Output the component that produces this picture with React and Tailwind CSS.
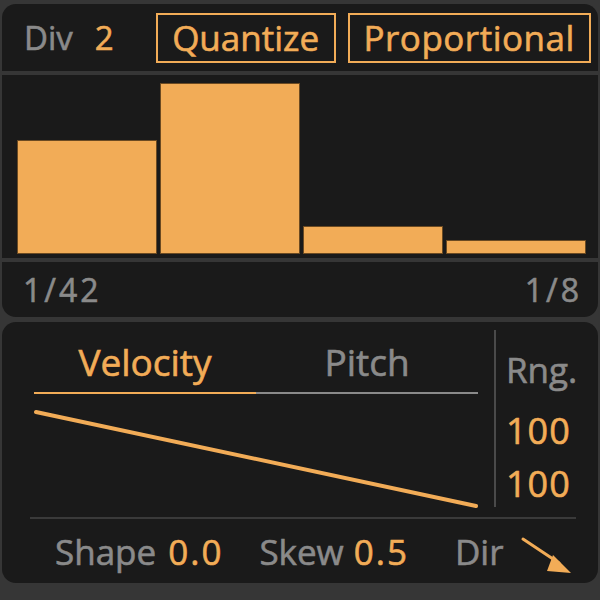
import React from "react";

const bars = [114, 171, 28, 14];

export default function App() {
  return (
    <div
      className="w-[600px] h-[600px] bg-[#363636] pt-[4px] px-[2px] flex flex-col [-webkit-text-stroke:0.6px_currentColor]"
      style={{ fontFamily: "'Open Sans', Lato, sans-serif" }}
    >
      {/* header */}
      <div className="h-[67px] bg-[#1a1a1a] rounded-t-[14px] flex items-center pl-[22px] pr-[6px]">
        <span className="text-[33px] text-[#8a8a8a] leading-none">Div</span>
        <span className="text-[33px] text-[#f2ac57] leading-none ml-[22px]">2</span>
        <div className="ml-[42px] h-[50px] w-[180px] border-2 border-[#f2ac57] flex items-center justify-center text-[35px] text-[#f2ac57] leading-none">
          Quantize
        </div>
        <div className="ml-[12px] h-[50px] w-[243px] border-2 border-[#f2ac57] flex items-center justify-center text-[35px] text-[#f2ac57] leading-none tracking-[0.5px]">
          Proportional
        </div>
      </div>

      {/* chart */}
      <div className="mt-[4px] h-[183px] bg-[#1a1a1a] flex items-end gap-[3px] pl-[15px] pb-[4px]">
        {bars.map((h, i) => (
          <div
            key={i}
            className="w-[140px] bg-[#f2ac57] border border-[#6b4a22]"
            style={{ height: h }}
          />
        ))}
      </div>

      {/* labels */}
      <div className="mt-[4px] h-[55px] bg-[#1a1a1a] rounded-b-[14px] flex items-center justify-between pl-[21px] pr-[16px] text-[32px] text-[#8a8a8a] leading-none tracking-[3px]">
        <span>1/42</span>
        <span>1/8</span>
      </div>

      {/* bottom panel */}
      <div className="mt-[5px] h-[261px] bg-[#1a1a1a] rounded-[14px] flex flex-col">
        <div className="flex h-[195px]">
          <div className="w-[444px] ml-[32px] flex flex-col">
            <div className="h-[70px] flex">
              <div className="w-[222px] flex items-end justify-center pb-[12px] text-[37px] text-[#f2ac57] leading-none">
                Velocity
              </div>
              <div className="w-[222px] flex items-end justify-center pb-[12px] text-[37px] text-[#8a8a8a] leading-none">
                Pitch
              </div>
            </div>
            <div className="flex h-[2px]">
              <div className="w-[222px] bg-[#f2ac57]" />
              <div className="w-[222px] bg-[#8a8a8a]" />
            </div>
            <svg width="446" height="120" viewBox="0 0 446 120">
              <line x1="2" y1="18" x2="442" y2="112" stroke="#f2ac57" strokeWidth="4" strokeLinecap="round" />
            </svg>
          </div>
          <div className="ml-[16px] mt-[8px] w-[2px] h-[177px] bg-[#4a4a4a]" />
          <div className="flex flex-col pl-[10px] pt-[30px]">
            <span className="text-[35px] text-[#8a8a8a] leading-none">Rng.</span>
            <span className="mt-[26px] text-[36px] text-[#f2ac57] leading-none tracking-[1px]">100</span>
            <span className="mt-[17px] text-[36px] text-[#f2ac57] leading-none tracking-[1px]">100</span>
          </div>
        </div>
        <div className="ml-[28px] w-[546px] h-[2px] bg-[#3a3a3a]" />
        <div className="flex items-center h-[64px] pl-[53px] text-[35px] leading-none">
          <span className="text-[#8a8a8a]">Shape</span>
          <span className="ml-[12px] text-[#f2ac57] tracking-[2px]">0.0</span>
          <span className="ml-[36px] text-[#8a8a8a]">Skew</span>
          <span className="ml-[10px] text-[#f2ac57] tracking-[2px]">0.5</span>
          <span className="ml-[46px] text-[#8a8a8a]">Dir</span>
          <svg width="56" height="44" viewBox="0 0 56 44" className="ml-[15px] mt-[12px]">
            <line x1="4" y1="4" x2="40" y2="28" stroke="#f2ac57" strokeWidth="3" strokeLinecap="round" />
            <polygon points="34,20 52,38 28,36" fill="#f2ac57" />
          </svg>
        </div>
      </div>
    </div>
  );
}
